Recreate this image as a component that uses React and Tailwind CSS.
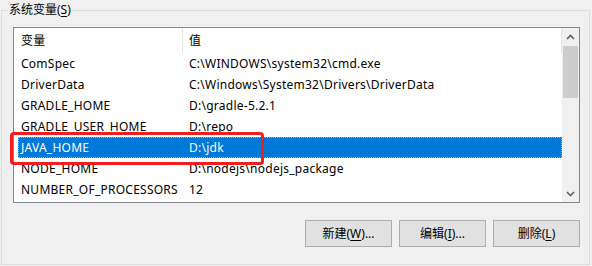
import React from "react";

const rows = [
  ["ComSpec", "C:\\WINDOWS\\system32\\cmd.exe"],
  ["DriverData", "C:\\Windows\\System32\\Drivers\\DriverData"],
  ["GRADLE_HOME", "D:\\gradle-5.2.1"],
  ["GRADLE_USER_HOME", "D:\\repo"],
  ["JAVA_HOME", "D:\\jdk", true],
  ["NODE_HOME", "D:\\nodejs\\nodejs_package"],
  ["NUMBER_OF_PROCESSORS", "12"],
];

function Chevron({ up }) {
  return (
    <svg width="9" height="6" viewBox="0 0 9 6">
      <polyline
        points={up ? "1,5 4.5,1.5 8,5" : "1,1 4.5,4.5 8,1"}
        fill="none"
        stroke="#606060"
        strokeWidth="1.6"
      />
    </svg>
  );
}

function Btn({ pre, k, post }) {
  return (
    <div className="w-[87px] h-[27px] bg-[#e1e1e1] border border-[#adadad] flex items-center justify-center text-[12px] leading-[16px] text-black">
      {pre}(<span className="underline underline-offset-2">{k}</span>){post}
    </div>
  );
}

export default function App() {
  return (
    <div className="w-[592px] h-[266px] bg-[#f0f0f0] relative overflow-hidden font-['Noto_Sans','Noto_Sans_CJK_SC',sans-serif] text-black">
      <div className="ml-[1px] mt-[10px] w-[589px] h-[255px] border border-[#dcdcdc] relative pl-[11px] pt-[16px]">
        <span className="absolute left-[6px] top-[-9px] bg-[#f0f0f0] px-[1px] text-[12px] leading-[16px]">
          系统变量(<span className="underline underline-offset-2">S</span>)
        </span>
        <div className="w-[567px] h-[176px] border border-[#828790] bg-white flex">
          <div className="flex-1 flex flex-col text-[12px] leading-[16px] tracking-[0.25px]">
            <div className="h-[25px] flex">
              <div className="w-[169px] border-r border-[#e5e5e5] pl-[7px] flex items-center">变量</div>
              <div className="flex-1 border-r border-[#e5e5e5] pl-[6px] flex items-center">值</div>
            </div>
            {rows.map(([n, v, sel]) =>
              sel ? (
                <div key={n} className="h-[21px] flex">
                  <div className="ml-[4px] flex-1 flex bg-[#0078d7] border border-dotted border-[#e8a050] text-white">
                    <div className="w-[164px] pl-[2px] flex items-center">{n}</div>
                    <div className="flex-1 pl-[6px] flex items-center">{v}</div>
                  </div>
                </div>
              ) : (
                <div key={n} className="h-[21px] flex">
                  <div className="w-[169px] pl-[7px] flex items-center whitespace-nowrap">{n}</div>
                  <div className="flex-1 pl-[6px] flex items-center whitespace-nowrap">{v}</div>
                </div>
              )
            )}
          </div>
          <div className="w-[17px] bg-[#f0f0f0] flex flex-col">
            <div className="h-[17px] flex items-center justify-center">
              <Chevron up />
            </div>
            <div className="mt-[1px] mx-[1px] h-[52px] bg-[#cdcdcd]" />
            <div className="mt-auto h-[17px] flex items-center justify-center">
              <Chevron />
            </div>
          </div>
        </div>
        <div className="w-[567px] mt-[17px] flex justify-end gap-[7px]">
          <Btn pre="新建" k="W" post="..." />
          <Btn pre="编辑" k="I" post="..." />
          <Btn pre="删除" k="L" post="" />
        </div>
      </div>
      <div className="absolute left-[10px] top-[132px] w-[254px] h-[33px] border-[3px] border-[#f01e1e] rounded-[4px]" />
    </div>
  );
}
